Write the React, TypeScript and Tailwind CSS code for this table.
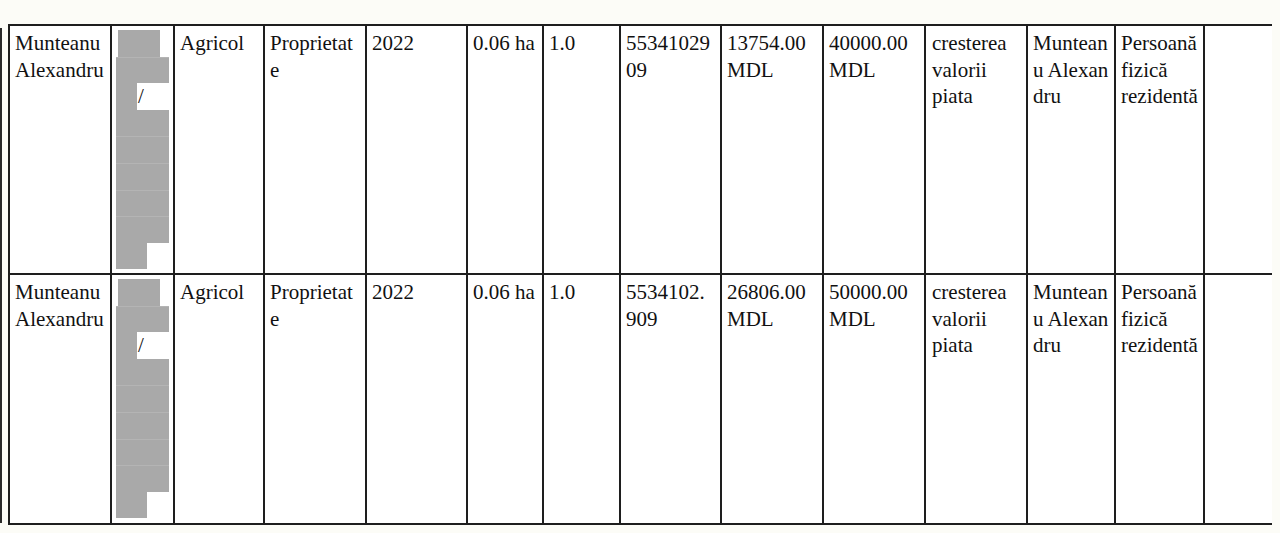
import React from "react";

const cols =
  "grid grid-cols-[102px_63px_90px_102px_101px_76px_77px_101px_102px_102px_102px_88px_89px_69px]";

type Row = {
  num: string[];
  val1: string[];
  val2: string[];
};

const rows: Row[] = [
  { num: ["55341029", "09"], val1: ["13754.00", "MDL"], val2: ["40000.00", "MDL"] },
  { num: ["5534102.", "909"], val1: ["26806.00", "MDL"], val2: ["50000.00", "MDL"] },
];

function Lines({ lines }: { lines: string[] }) {
  return (
    <>
      {lines.map((l, i) => (
        <div key={i} className="whitespace-pre">
          {l}
        </div>
      ))}
    </>
  );
}

function Cell({ children, last }: { children?: React.ReactNode; last?: boolean }) {
  return (
    <div
      className={
        "border-l-2 border-[#1e1e1e] pl-[5px] pt-[4px] " + (last ? "bg-white" : "bg-white")
      }
    >
      {children}
    </div>
  );
}

function Redacted() {
  const g = "bg-[#a9a9a9]";
  return (
    <div className="border-l-2 border-[#1e1e1e] bg-white pl-[4px] pt-[4px]">
      <div className="flex flex-col">
        <div className="h-[26.6px] pl-[2px]">
          <div className={"h-full w-[42px] " + g} />
        </div>
        <div className={"h-[26.6px] w-[53px] border-t border-[#b4b4b4] " + g} />
        <div className="flex h-[26.6px] items-start">
          <div className={"h-full w-[21px] " + g} />
          <span className="pl-[1px] text-[#111]">/</span>
        </div>
        <div className={"h-[26.6px] w-[53px] " + g} />
        <div className={"h-[26.6px] w-[53px] border-t border-[#b4b4b4] " + g} />
        <div className={"h-[26.6px] w-[53px] border-t border-[#b4b4b4] " + g} />
        <div className={"h-[26.6px] w-[53px] border-t border-[#b4b4b4] " + g} />
        <div className={"h-[26.6px] w-[53px] border-t border-[#b4b4b4] " + g} />
        <div className={"h-[26.6px] w-[31px] " + g} />
      </div>
    </div>
  );
}

export default function App() {
  return (
    <div
      className="flex h-[533px] w-[1280px] overflow-hidden bg-[#fcfcf7] text-[21px] leading-[26.6px] text-[#111]"
      style={{ fontFamily: '"Liberation Serif", "Times New Roman", serif' }}
    >
      <div className="mt-[28px] h-[495px] w-[2px] bg-[#2a2a2a]" />
      <div className="ml-[6px] mt-[24px] flex flex-col border-t-2 border-[#1e1e1e]">
        {rows.map((r, i) => (
          <div
            key={i}
            className={cols + " border-b-2 border-[#1e1e1e] " + (i === 0 ? "h-[249px]" : "h-[250px]")}
          >
            <Cell>
              <Lines lines={["Munteanu", "Alexandru"]} />
            </Cell>
            <Redacted />
            <Cell>
              <Lines lines={["Agricol"]} />
            </Cell>
            <Cell>
              <Lines lines={["Proprietat", "e"]} />
            </Cell>
            <Cell>
              <Lines lines={["2022"]} />
            </Cell>
            <Cell>
              <Lines lines={["0.06 ha"]} />
            </Cell>
            <Cell>
              <Lines lines={["1.0"]} />
            </Cell>
            <Cell>
              <Lines lines={r.num} />
            </Cell>
            <Cell>
              <Lines lines={r.val1} />
            </Cell>
            <Cell>
              <Lines lines={r.val2} />
            </Cell>
            <Cell>
              <div className="pl-[1px]">
                <Lines lines={["cresterea", "valorii", "piata"]} />
              </div>
            </Cell>
            <Cell>
              <Lines lines={["Muntean", "u Alexan", "dru"]} />
            </Cell>
            <Cell>
              <Lines lines={["Persoană", "fizică", "rezidentă"]} />
            </Cell>
            <Cell last />
          </div>
        ))}
      </div>
    </div>
  );
}
